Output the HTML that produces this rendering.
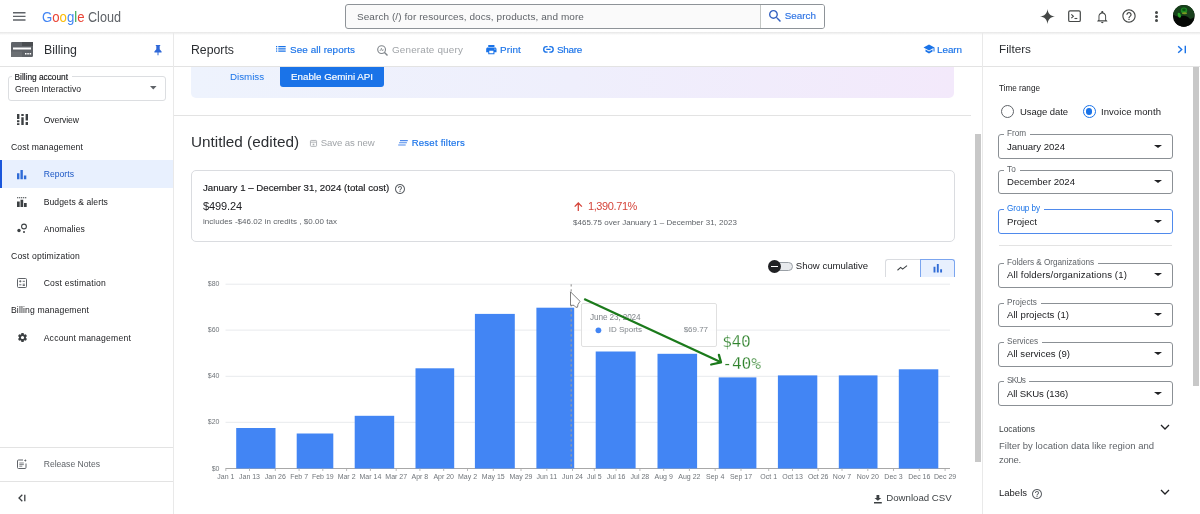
<!DOCTYPE html>
<html lang="en">
<head>
<meta charset="utf-8">
<title>Reports – Billing – Google Cloud console</title>
<style>
*{box-sizing:border-box;margin:0;padding:0}
html,body{width:1200px;height:514px;overflow:hidden;background:#fff;font-family:"Liberation Sans",Arial,sans-serif;color:#202124}
#app{position:relative;width:1200px;height:514px;overflow:hidden;background:#fff}
.t{position:absolute;white-space:pre;display:block}
.b{position:absolute;display:block}
.hl{position:absolute;height:1px;background:#e3e3e3}
.vl{position:absolute;width:1px;background:#e9e9e9}
.sel{position:absolute;left:998px;width:175px;border:1px solid #8b9095;border-radius:3px;background:#fff}
.lblbg{position:absolute;height:3px;background:#fff}
.caret{position:absolute;width:0;height:0;border-left:4px solid transparent;border-right:4px solid transparent;border-top:3.900px solid #202124}
svg{position:absolute;overflow:visible}
</style>
</head>
<body>
<div id="app">

<!-- ===== top header ===== -->
<div class="b" style="left:0;top:32px;width:1200px;height:2.500px;background:linear-gradient(180deg,#e6e6e6 0%,#f1f1f1 45%,rgba(255,255,255,0) 100%)"></div>
<!-- hamburger -->
<svg style="left:12.500px;top:12px" width="12.500" height="9" viewBox="0 0 12.500 9"><path d="M0 0.800h12.500M0 4.400h12.500M0 8h12.500" stroke="#5f6368" stroke-width="1.400"/></svg>
<!-- search box -->
<div class="b" style="left:345px;top:4px;width:480px;height:25px;border:1px solid #8e9398;border-radius:3px;background:#fafafa"></div>
<div class="b" style="left:760px;top:5px;width:64px;height:23px;background:#fff;border-left:1px solid #c4c7c5;border-radius:0 2px 2px 0"></div>
<svg style="left:768.700px;top:10.300px" width="12" height="12" viewBox="3 3 17.500 17.500"><path fill="#3461c1" d="M15.500 14h-.79l-.28-.27A6.470 6.470 0 0 0 16 9.500 6.500 6.500 0 1 0 9.500 16c1.610 0 3.090-.590 4.230-1.570l.27.280v.790l5 4.990L20.490 19l-4.990-5zm-6 0C7.010 14 5 11.990 5 9.500S7.010 5 9.500 5 14 7.010 14 9.500 11.990 14 9.500 14z"/></svg>
<!-- right icons -->
<svg style="left:1040px;top:8.800px" width="15" height="15" viewBox="0 0 16 16"><path fill="#444746" d="M8 0C8.400 4.800 11.200 7.600 16 8 11.200 8.400 8.400 11.200 8 16 7.600 11.200 4.800 8.400 0 8 4.800 7.600 7.600 4.800 8 0z"/></svg>
<svg style="left:1067.800px;top:10px" width="13" height="12.400" viewBox="0 0 13 12"><rect x="0.700" y="0.700" width="11.600" height="10.600" rx="1.300" fill="none" stroke="#444746" stroke-width="1.200"/><path d="M3.300 4.200l2.100 1.900-2.100 1.900" fill="none" stroke="#444746" stroke-width="1.100"/><path d="M6.500 8.300h2.800" stroke="#444746" stroke-width="1.100"/></svg>
<svg style="left:1096px;top:9.600px" width="12.600" height="14.200" viewBox="0 0 24 28"><path fill="#444746" d="M12 26c1.300 0 2.400-1.100 2.400-2.400H9.600C9.600 24.900 10.700 26 12 26zm7.500-7V12.500c0-3.700-2-6.800-5.500-7.600V4c0-1.100-.9-2-2-2s-2 .9-2 2v.9C6.500 5.700 4.500 8.800 4.500 12.500V19L2 21.500V22.500h20v-1L19.500 19zm-1.900 1.200H6.400v-7.700c0-3 2.200-5.800 5.600-5.800s5.600 2.800 5.600 5.800v7.700z"/></svg>
<svg style="left:1121.400px;top:8.300px" width="16" height="16" viewBox="0 0 24 24"><path fill="#444746" d="M11.100 18h1.800v-1.900h-1.800V18zM12 2C6.480 2 2 6.480 2 12s4.480 10 10 10 10-4.480 10-10S17.520 2 12 2zm0 18.300c-4.580 0-8.300-3.720-8.300-8.300S7.420 3.700 12 3.700s8.300 3.720 8.300 8.300-3.720 8.300-8.300 8.300zM12 6c-2.210 0-4 1.790-4 4h1.800c0-1.200 1-2.200 2.200-2.200s2.200 1 2.200 2.200c0 2-3.100 1.900-3.100 5h1.800c0-2.250 3.100-2.500 3.100-5 0-2.210-1.790-4-4-4z"/></svg>
<div class="b" style="left:1154.800px;top:11px;width:3.200px;height:3.200px;border-radius:50%;background:#444746"></div>
<div class="b" style="left:1154.800px;top:14.900px;width:3.200px;height:3.200px;border-radius:50%;background:#444746"></div>
<div class="b" style="left:1154.800px;top:18.800px;width:3.200px;height:3.200px;border-radius:50%;background:#444746"></div>
<!-- avatar -->
<svg style="left:1173px;top:5px" width="22" height="22" viewBox="0 0 22 22"><defs><clipPath id="av"><circle cx="10.800" cy="10.900" r="10.800"/></clipPath></defs><circle cx="10.800" cy="10.900" r="10.800" fill="#070b07"/><g clip-path="url(#av)"><ellipse cx="10" cy="5" rx="12" ry="7.500" fill="#16401a"/><ellipse cx="17" cy="9" rx="5" ry="5" fill="#1a3f1d"/><path d="M4 14C8 10 13 9.500 17 14L22 22H0z" fill="#050805"/><ellipse cx="6.300" cy="10.300" rx="1.500" ry="2.600" fill="#2aa62a" transform="rotate(-20 6.300 10.300)"/><ellipse cx="11" cy="5.500" rx="3.200" ry="3" fill="#1d8a22"/><ellipse cx="11" cy="4.800" rx="1.800" ry="1.300" fill="#0a5412"/><ellipse cx="11.500" cy="8.200" rx="2.600" ry="1" fill="#7c9a22"/></g></svg>

<!-- ===== sub header ===== -->
<div class="hl" style="left:0;top:66px;width:1200px"></div>
<div class="vl" style="left:173px;top:33px;height:481px"></div>
<div class="vl" style="left:982px;top:33px;height:481px"></div>
<!-- billing icon -->
<svg style="left:11px;top:42px" width="22" height="15" viewBox="0 0 22 15"><rect width="22" height="15" rx="1.200" fill="#5f6368"/><rect x="11" y="0" width="11" height="4" fill="#4a4d51"/><rect x="2" y="5.500" width="18" height="2" fill="#fff"/><rect x="0" y="9.500" width="11" height="5.500" fill="#6b6f73"/><rect x="14" y="11" width="1.500" height="1.500" fill="#fff"/><rect x="16.300" y="11" width="1.500" height="1.500" fill="#fff"/><rect x="18.600" y="11" width="1.500" height="1.500" fill="#fff"/></svg>
<!-- pin -->
<svg style="left:153.800px;top:44.800px" width="8" height="10.500" viewBox="0 0 8 10.500"><path fill="#2f68d8" d="M1.800 0h4.400v.9h-.5v3.400l1.900 2.100v1H4.500v2.600l-.5.500-.5-.5V7.400H.4v-1l1.900-2.100V.9h-.5z"/></svg>
<!-- see all reports icon -->
<svg style="left:276.300px;top:46.300px" width="9.700" height="5.800" viewBox="0 0 9.700 5.800"><path fill="#1a73e8" d="M0 0h1.200v1.200H0zM2.300 0h7.400v1.200H2.300zM0 2.300h1.200v1.200H0zM2.300 2.300h7.400v1.200H2.300zM0 4.600h1.200v1.200H0zM2.300 4.600h7.400v1.200H2.300z"/></svg>
<!-- generate query icon -->
<svg style="left:377px;top:44.500px" width="11" height="11" viewBox="0 0 11 11"><circle cx="4.600" cy="4.600" r="3.900" fill="none" stroke="#80868b" stroke-width="1.100"/><path d="M7.500 7.500l3 3" stroke="#80868b" stroke-width="1.400"/><path d="M2.600 5.400h1l.8-2.200.9 2.600.5-.9h1" fill="none" stroke="#80868b" stroke-width="0.700"/></svg>
<!-- print icon -->
<svg style="left:485.600px;top:44.500px" width="10.700" height="9.300" viewBox="2 2 20 18"><path fill="#1a73e8" d="M19 7H5c-1.660 0-3 1.340-3 3v6h4v4h12v-4h4v-6c0-1.660-1.340-3-3-3zm-3 11H8v-5h8v5zm3-7c-.55 0-1-.45-1-1s.45-1 1-1 1 .45 1 1-.45 1-1 1zm-1-9H6v4h12V2z"/></svg>
<!-- share(link) icon -->
<svg style="left:543.100px;top:46px" width="10.900" height="6.900" viewBox="0 0 10.900 6.900"><path d="M4.600 0.700H3.450a2.750 2.750 0 0 0 0 5.500H4.600M6.300 0.700H7.450a2.750 2.750 0 0 1 0 5.500H6.300M3.300 3.450h4.300" fill="none" stroke="#1a73e8" stroke-width="1.350"/></svg>
<!-- learn icon -->
<svg style="left:923px;top:44px" width="12" height="10" viewBox="0 0 24 20"><path fill="#1a73e8" d="M5 11.180v4L12 19l7-3.820v-4L12 15l-7-3.820zM12 1L1 7l11 6 9-4.910V15h2V7L12 1z"/></svg>
<!-- filters collapse icon -->
<svg style="left:1177px;top:45px" width="10" height="9" viewBox="0 0 10 9"><path d="M1.200 1.200L4.700 4.500 1.200 7.800" fill="none" stroke="#1a73e8" stroke-width="1.400"/><path d="M8.300 0.800v7.400" stroke="#1a73e8" stroke-width="1.400"/></svg>

<!-- ===== sidebar ===== -->
<div class="b" style="left:8px;top:76px;width:158px;height:24.500px;border:1px solid #dcdee1;border-radius:3px;background:#fff"></div>
<div class="lblbg" style="left:12px;top:76px;width:60px"></div>
<svg style="left:149.600px;top:86.300px" width="6.600" height="3.600" viewBox="0 0 6.600 3.600"><path d="M0 0h6.600L3.300 3.600z" fill="#5f6368"/></svg>
<!-- overview icon -->
<svg style="left:17px;top:114px" width="11" height="11" viewBox="0 0 11 11"><path fill="#3c4043" d="M0 0h2.400v5H0zM0 6.300h2.400v1.900H0zM0 9.300h2.400V11H0zM4.300 0h2.400v2H4.300zM4.300 3.300h2.400V11H4.300zM8.600 0H11v6.500H8.600zM8.600 8H11v3H8.600z"/></svg>
<!-- active row -->
<div class="b" style="left:0;top:160px;width:173px;height:27.500px;background:#e8f0fe"></div>
<div class="b" style="left:0;top:160px;width:2px;height:27.500px;background:#1a56db"></div>
<svg style="left:17px;top:169.500px" width="9.300" height="9.300" viewBox="0 0 9.300 9.300"><path fill="#2f6bd6" d="M0 3.200h2.400v6.100H0zM3.450 0h2.400v9.300h-2.400zM6.900 5.600h2.400v3.700H6.900z"/></svg>
<!-- budgets icon -->
<svg style="left:17px;top:196.500px" width="10" height="10" viewBox="0 0 10 10"><path fill="#3c4043" d="M0 4.500h2.700V10H0zM3.500 2.800h2.700V10H3.500zM7 6h2.700v4H7z"/><path d="M0 0.800h9.700" stroke="#3c4043" stroke-width="1.100" stroke-dasharray="1.300 0.700"/></svg>
<!-- anomalies icon -->
<svg style="left:17px;top:223px" width="11" height="11" viewBox="0 0 11 11"><circle cx="2" cy="7.500" r="1.700" fill="#3c4043"/><circle cx="7" cy="3.500" r="2.400" fill="none" stroke="#3c4043" stroke-width="1.100"/><circle cx="7" cy="9" r="1" fill="#3c4043"/></svg>
<!-- cost estimation icon -->
<svg style="left:17px;top:278px" width="10" height="10" viewBox="0 0 10 10"><rect x="0.500" y="0.500" width="9" height="9" rx="1" fill="none" stroke="#5f6368" stroke-width="1"/><path d="M2.200 3.300h2.200M3.300 2.200v2.200M5.700 3.300h2.200M2.200 6.800h2.200M5.700 6.200h2.200M5.700 7.500h2.200" stroke="#5f6368" stroke-width="0.950"/></svg>
<!-- gear icon -->
<svg style="left:16.500px;top:332px" width="11" height="11" viewBox="0 0 24 24"><path fill="#3c4043" d="M19.430 12.980c.04-.32.070-.64.070-.98s-.03-.66-.07-.98l2.110-1.650c.19-.15.240-.42.120-.64l-2-3.460c-.12-.22-.39-.3-.61-.22l-2.490 1c-.52-.4-1.080-.73-1.690-.98l-.38-2.650C14.460 2.180 14.250 2 14 2h-4c-.25 0-.46.180-.49.420l-.38 2.650c-.61.250-1.170.59-1.690.98l-2.490-1c-.23-.09-.49 0-.61.220l-2 3.460c-.13.220-.07.490.12.640l2.110 1.650c-.04.320-.07.650-.07.980s.03.660.07.980l-2.110 1.650c-.19.150-.24.420-.12.640l2 3.460c.12.220.39.300.61.220l2.490-1c.52.400 1.080.73 1.690.98l.38 2.650c.03.240.24.420.49.420h4c.25 0 .46-.18.490-.42l.38-2.650c.61-.25 1.170-.59 1.690-.98l2.490 1c.23.090.49 0 .61-.22l2-3.460c.12-.22.070-.49-.12-.64l-2.110-1.650zM12 15.500c-1.930 0-3.500-1.570-3.500-3.500s1.570-3.500 3.500-3.500 3.500 1.570 3.500 3.500-1.570 3.500-3.500 3.500z"/></svg>
<div class="hl" style="left:0;top:447px;width:173px"></div>
<div class="hl" style="left:0;top:481px;width:173px"></div>
<!-- release notes icon -->
<svg style="left:17px;top:459px" width="10" height="10" viewBox="0 0 10 10"><path d="M6 1H1.500A1 1 0 0 0 .5 2v6.500a1 1 0 0 0 1 1H8a1 1 0 0 0 1-1V4.500" fill="none" stroke="#5f6368" stroke-width="1"/><path d="M2.300 4h4.500M2.300 5.600h4.500M2.300 7.200h3" stroke="#5f6368" stroke-width="0.800"/><path d="M8.300 0l.4 1.100 1.100.4-1.100.4-.4 1.100-.4-1.100-1.100-.4 1.100-.4z" fill="#5f6368"/></svg>
<!-- collapse icon -->
<svg style="left:17.500px;top:493.500px" width="8" height="8" viewBox="0 0 8 8"><path d="M4.300 0.800L1 4l3.300 3.200" fill="none" stroke="#3c4043" stroke-width="1.300"/><path d="M6.800 0.800v6.400" stroke="#3c4043" stroke-width="1.300"/></svg>

<!-- ===== main content ===== -->
<!-- banner -->
<div class="b" style="left:191px;top:67px;width:763px;height:31px;border-radius:0 0 5px 5px;background:linear-gradient(90deg,#eef3fd 0%,#efeffc 50%,#f3e9fb 100%)"></div>
<div class="b" style="left:280px;top:67px;width:104px;height:20px;border-radius:0 0 3px 3px;background:#1a73e8"></div>
<div class="hl" style="left:174px;top:115px;width:797px"></div>
<!-- main scrollbar -->
<div class="b" style="left:975.100px;top:134px;width:6px;height:327.600px;background:#c8c8c8"></div>
<!-- save-as-new icon -->
<svg style="left:310.200px;top:140.300px" width="7" height="6.800" viewBox="0 0 7 6.800"><rect x="0.450" y="0.450" width="6.100" height="5.900" rx="0.700" fill="none" stroke="#a9adb1" stroke-width="0.900"/><path d="M0.500 2.200h6" stroke="#a9adb1" stroke-width="0.900"/><rect x="2.700" y="3.700" width="1.600" height="1.600" fill="#a9adb1"/></svg>
<!-- reset filters icon -->
<svg style="left:398.200px;top:140.200px" width="10" height="5.600" viewBox="0 0 10 5.600"><path d="M2 0.600h7.800M1.100 2.800h7.800M0.200 5h7.500" stroke="#4f8aec" stroke-width="1.150"/></svg>
<!-- summary card -->
<div class="b" style="left:191px;top:170px;width:764px;height:72px;border:1px solid #dadce0;border-radius:5px;background:#fff"></div>
<svg style="left:394.200px;top:182.500px" width="12" height="12" viewBox="0 0 24 24"><path fill="#5f6368" d="M11 18h2v-2h-2v2zm1-16C6.480 2 2 6.480 2 12s4.480 10 10 10 10-4.480 10-10S17.520 2 12 2zm0 18c-4.410 0-8-3.590-8-8s3.590-8 8-8 8 3.590 8 8-3.590 8-8 8zm0-14c-2.210 0-4 1.790-4 4h2c0-1.100.9-2 2-2s2 .9 2 2c0 2-3 1.750-3 5h2c0-2.250 3-2.500 3-5 0-2.210-1.790-4-4-4z"/></svg>
<!-- red up arrow -->
<svg style="left:574.300px;top:201.800px" width="8.600" height="9" viewBox="0 0 8.600 9"><path d="M4.300 9V1.200M0.700 4.600L4.300 1l3.600 3.600" fill="none" stroke="#d5443a" stroke-width="1.250"/></svg>
<!-- toggle -->
<div class="b" style="left:772px;top:262px;width:21px;height:9px;border-radius:5px;background:#e8eaed;border:1px solid #9aa0a6"></div>
<div class="b" style="left:768px;top:260px;width:13px;height:13px;border-radius:50%;background:#202124"></div>
<div class="b" style="left:771px;top:265.700px;width:7px;height:1.600px;background:#fff"></div>
<!-- chart type buttons -->
<div class="b" style="left:885.200px;top:259.400px;width:36px;height:17.500px;border:1px solid #dadce0;border-bottom:none;border-right:none;border-radius:3px 0 0 0;background:#fff"></div>
<div class="b" style="left:920.200px;top:259.400px;width:34.500px;height:17.500px;background:#e8f0fe;border:1px solid #7ba5ef;border-bottom:none;border-radius:0 3px 0 0"></div>
<svg style="left:897.300px;top:264.800px" width="10.500" height="6.200" viewBox="0 0 11 6.500"><path d="M0.500 5.500L3.800 2.600l2.100 1.800L10.500 0.700" fill="none" stroke="#3c4043" stroke-width="1.100"/></svg>
<svg style="left:932.500px;top:264.400px" width="9.600" height="8.500" viewBox="0 0 9 9"><path fill="#2f6bd6" d="M0 3h2v6H0zM3.500 0h2v9h-2zM7 5.500h2V9H7z"/></svg>

<svg style="left:0;top:0;will-change:transform" width="1200" height="514" viewBox="0 0 1200 514">
<path d="M225.500 284.2H950" stroke="#e8eaed" stroke-width="1"/>
<path d="M225.500 330.1H950" stroke="#e8eaed" stroke-width="1"/>
<path d="M225.500 376.3H950" stroke="#e8eaed" stroke-width="1"/>
<path d="M225.500 422.3H950" stroke="#e8eaed" stroke-width="1"/>
<path d="M225.500 468.5H950" stroke="#a8a8a8" stroke-width="1"/>
<rect x="236.2" y="428.0" width="39.3" height="40.5" fill="#4285f4"/>
<rect x="296.7" y="433.5" width="36.6" height="35.0" fill="#4285f4"/>
<rect x="354.7" y="415.8" width="39.5" height="52.7" fill="#4285f4"/>
<rect x="415.5" y="368.3" width="38.7" height="100.2" fill="#4285f4"/>
<rect x="474.9" y="313.9" width="39.9" height="154.6" fill="#4285f4"/>
<rect x="536.4" y="307.7" width="37.8" height="160.8" fill="#4285f4"/>
<rect x="595.7" y="351.5" width="39.9" height="117.0" fill="#4285f4"/>
<rect x="657.5" y="353.8" width="39.6" height="114.7" fill="#4285f4"/>
<rect x="718.7" y="377.4" width="37.7" height="91.1" fill="#4285f4"/>
<rect x="777.9" y="375.4" width="39.4" height="93.1" fill="#4285f4"/>
<rect x="838.8" y="375.4" width="38.7" height="93.1" fill="#4285f4"/>
<rect x="898.8" y="369.3" width="39.5" height="99.2" fill="#4285f4"/>
<path d="M571.200 284.200V468" stroke="#9e9e9e" stroke-width="1.200" stroke-dasharray="2.400 2.600"/>
<text x="219.500" y="286.3" text-anchor="end" font-size="7" fill="#70757a" font-family="Liberation Sans, Arial, sans-serif">$80</text>
<text x="219.500" y="332.2" text-anchor="end" font-size="7" fill="#70757a" font-family="Liberation Sans, Arial, sans-serif">$60</text>
<text x="219.500" y="378.4" text-anchor="end" font-size="7" fill="#70757a" font-family="Liberation Sans, Arial, sans-serif">$40</text>
<text x="219.500" y="424.4" text-anchor="end" font-size="7" fill="#70757a" font-family="Liberation Sans, Arial, sans-serif">$20</text>
<text x="219.500" y="470.6" text-anchor="end" font-size="7" fill="#70757a" font-family="Liberation Sans, Arial, sans-serif">$0</text>
<text x="225.8" y="479" text-anchor="middle" font-size="7" fill="#70757a" font-family="Liberation Sans, Arial, sans-serif">Jan 1</text>
<text x="249.5" y="479" text-anchor="middle" font-size="7" fill="#70757a" font-family="Liberation Sans, Arial, sans-serif">Jan 13</text>
<text x="275.3" y="479" text-anchor="middle" font-size="7" fill="#70757a" font-family="Liberation Sans, Arial, sans-serif">Jan 26</text>
<text x="299.1" y="479" text-anchor="middle" font-size="7" fill="#70757a" font-family="Liberation Sans, Arial, sans-serif">Feb 7</text>
<text x="322.8" y="479" text-anchor="middle" font-size="7" fill="#70757a" font-family="Liberation Sans, Arial, sans-serif">Feb 19</text>
<text x="346.6" y="479" text-anchor="middle" font-size="7" fill="#70757a" font-family="Liberation Sans, Arial, sans-serif">Mar 2</text>
<text x="370.4" y="479" text-anchor="middle" font-size="7" fill="#70757a" font-family="Liberation Sans, Arial, sans-serif">Mar 14</text>
<text x="396.2" y="479" text-anchor="middle" font-size="7" fill="#70757a" font-family="Liberation Sans, Arial, sans-serif">Mar 27</text>
<text x="419.9" y="479" text-anchor="middle" font-size="7" fill="#70757a" font-family="Liberation Sans, Arial, sans-serif">Apr 8</text>
<text x="443.7" y="479" text-anchor="middle" font-size="7" fill="#70757a" font-family="Liberation Sans, Arial, sans-serif">Apr 20</text>
<text x="467.5" y="479" text-anchor="middle" font-size="7" fill="#70757a" font-family="Liberation Sans, Arial, sans-serif">May 2</text>
<text x="493.3" y="479" text-anchor="middle" font-size="7" fill="#70757a" font-family="Liberation Sans, Arial, sans-serif">May 15</text>
<text x="521.0" y="479" text-anchor="middle" font-size="7" fill="#70757a" font-family="Liberation Sans, Arial, sans-serif">May 29</text>
<text x="546.8" y="479" text-anchor="middle" font-size="7" fill="#70757a" font-family="Liberation Sans, Arial, sans-serif">Jun 11</text>
<text x="572.5" y="479" text-anchor="middle" font-size="7" fill="#70757a" font-family="Liberation Sans, Arial, sans-serif">Jun 24</text>
<text x="594.3" y="479" text-anchor="middle" font-size="7" fill="#70757a" font-family="Liberation Sans, Arial, sans-serif">Jul 5</text>
<text x="616.1" y="479" text-anchor="middle" font-size="7" fill="#70757a" font-family="Liberation Sans, Arial, sans-serif">Jul 16</text>
<text x="639.9" y="479" text-anchor="middle" font-size="7" fill="#70757a" font-family="Liberation Sans, Arial, sans-serif">Jul 28</text>
<text x="663.7" y="479" text-anchor="middle" font-size="7" fill="#70757a" font-family="Liberation Sans, Arial, sans-serif">Aug 9</text>
<text x="689.4" y="479" text-anchor="middle" font-size="7" fill="#70757a" font-family="Liberation Sans, Arial, sans-serif">Aug 22</text>
<text x="715.2" y="479" text-anchor="middle" font-size="7" fill="#70757a" font-family="Liberation Sans, Arial, sans-serif">Sep 4</text>
<text x="741.0" y="479" text-anchor="middle" font-size="7" fill="#70757a" font-family="Liberation Sans, Arial, sans-serif">Sep 17</text>
<text x="768.7" y="479" text-anchor="middle" font-size="7" fill="#70757a" font-family="Liberation Sans, Arial, sans-serif">Oct 1</text>
<text x="792.5" y="479" text-anchor="middle" font-size="7" fill="#70757a" font-family="Liberation Sans, Arial, sans-serif">Oct 13</text>
<text x="818.2" y="479" text-anchor="middle" font-size="7" fill="#70757a" font-family="Liberation Sans, Arial, sans-serif">Oct 26</text>
<text x="842.0" y="479" text-anchor="middle" font-size="7" fill="#70757a" font-family="Liberation Sans, Arial, sans-serif">Nov 7</text>
<text x="867.8" y="479" text-anchor="middle" font-size="7" fill="#70757a" font-family="Liberation Sans, Arial, sans-serif">Nov 20</text>
<text x="893.5" y="479" text-anchor="middle" font-size="7" fill="#70757a" font-family="Liberation Sans, Arial, sans-serif">Dec 3</text>
<text x="919.3" y="479" text-anchor="middle" font-size="7" fill="#70757a" font-family="Liberation Sans, Arial, sans-serif">Dec 16</text>
<text x="945.1" y="479" text-anchor="middle" font-size="7" fill="#70757a" font-family="Liberation Sans, Arial, sans-serif">Dec 29</text>
<path d="M225.8 468.500v2.500M249.5 468.500v2.500M275.3 468.500v2.500M299.1 468.500v2.500M322.8 468.500v2.500M346.6 468.500v2.500M370.4 468.500v2.500M396.2 468.500v2.500M419.9 468.500v2.500M443.7 468.500v2.500M467.5 468.500v2.500M493.3 468.500v2.500M521.0 468.500v2.500M546.8 468.500v2.500M572.5 468.500v2.500M594.3 468.500v2.500M616.1 468.500v2.500M639.9 468.500v2.500M663.7 468.500v2.500M689.4 468.500v2.500M715.2 468.500v2.500M741.0 468.500v2.500M768.7 468.500v2.500M792.5 468.500v2.500M818.2 468.500v2.500M842.0 468.500v2.500M867.8 468.500v2.500M893.5 468.500v2.500M919.3 468.500v2.500M945.1 468.500v2.500" stroke="#a8a8a8" stroke-width="0.800" fill="none"/>
</svg>
<div class="b" style="left:581px;top:303px;width:136px;height:43.500px;background:rgba(255,255,255,0.860);border:1px solid #e0e0e0;border-radius:2px"></div>
<svg style="left:595px;top:327px" width="7" height="7" viewBox="0 0 7 7"><circle cx="3.400" cy="3.300" r="2.900" fill="#4285f4"/></svg>

<!-- download icon -->
<svg style="left:873.500px;top:495px" width="7.800" height="8.600" viewBox="0 0 7.800 8.600"><path fill="#3c4043" d="M2.500 0h2.800v3h2L3.900 5.800 0.500 3h2zM0 7.100h7.800v1.500H0z"/></svg>

<!-- ===== filter panel ===== -->
<div class="b" style="left:1193.200px;top:67px;width:5.800px;height:319.200px;background:#c8c8c8"></div>
<!-- radios -->
<div class="b" style="left:1001px;top:105px;width:13px;height:13px;border-radius:50%;border:1.200px solid #5f6368;background:#fff"></div>
<div class="b" style="left:1082.500px;top:105px;width:13px;height:13px;border-radius:50%;border:1.300px solid #1a73e8;background:#fff"></div>
<div class="b" style="left:1085.700px;top:108.200px;width:6.600px;height:6.600px;border-radius:50%;background:#1a73e8"></div>
<!-- selects -->
<div class="sel" style="top:134px;height:24.500px"></div><div class="lblbg" style="left:1004px;top:133px;width:26px"></div><div class="caret" style="left:1154.400px;top:144.500px"></div>
<div class="sel" style="top:169.500px;height:24.500px"></div><div class="lblbg" style="left:1004px;top:168.500px;width:16px"></div><div class="caret" style="left:1154.400px;top:180px"></div>
<div class="sel" style="top:209px;height:24.500px;border-color:#4f8aec"></div><div class="lblbg" style="left:1004px;top:208px;width:40px"></div><div class="caret" style="left:1154.400px;top:219.500px"></div>
<div class="hl" style="left:999px;top:245px;width:173px"></div>
<div class="sel" style="top:262.500px;height:25px"></div><div class="lblbg" style="left:1004px;top:261.500px;width:94px"></div><div class="caret" style="left:1154.400px;top:273px"></div>
<div class="sel" style="top:302.500px;height:24px"></div><div class="lblbg" style="left:1004px;top:301.500px;width:37px"></div><div class="caret" style="left:1154.400px;top:312.500px"></div>
<div class="sel" style="top:341.500px;height:25px"></div><div class="lblbg" style="left:1004px;top:340.500px;width:38px"></div><div class="caret" style="left:1154.400px;top:352px"></div>
<div class="sel" style="top:380.500px;height:25px"></div><div class="lblbg" style="left:1004px;top:379.500px;width:25px"></div><div class="caret" style="left:1154.400px;top:391.500px"></div>
<!-- chevrons -->
<svg style="left:1160px;top:424px" width="10" height="7" viewBox="0 0 10 7"><path d="M1 1l4 4 4-4" fill="none" stroke="#202124" stroke-width="1.300"/></svg>
<svg style="left:1160px;top:489px" width="10" height="7" viewBox="0 0 10 7"><path d="M1 1l4 4 4-4" fill="none" stroke="#202124" stroke-width="1.300"/></svg>
<svg style="left:1031.400px;top:487.600px" width="12" height="12" viewBox="0 0 24 24"><path fill="#5f6368" d="M11 18h2v-2h-2v2zm1-16C6.480 2 2 6.480 2 12s4.480 10 10 10 10-4.480 10-10S17.520 2 12 2zm0 18c-4.410 0-8-3.590-8-8s3.590-8 8-8 8 3.590 8 8-3.590 8-8 8zm0-14c-2.210 0-4 1.790-4 4h2c0-1.100.9-2 2-2s2 .9 2 2c0 2-3 1.750-3 5h2c0-2.250 3-2.500 3-5 0-2.210-1.790-4-4-4z"/></svg>

<div id="tx" style="position:absolute;left:0;top:0;width:1200px;height:514px;will-change:transform">
<span class="t" style="left:42px;top:6.6px;font-size:15.3px;line-height:20px;letter-spacing:0.000px;color:#4285f4;transform-origin:0 50%;transform:scaleX(0.8616);"><span style="color:#4285f4">G</span><span style="color:#ea4335">o</span><span style="color:#fbbc05">o</span><span style="color:#4285f4">g</span><span style="color:#34a853">l</span><span style="color:#ea4335">e</span></span>
<span class="t" style="left:88px;top:6.6px;font-size:15.3px;line-height:20px;letter-spacing:0.000px;color:#5f6368;transform-origin:0 50%;transform:scaleX(0.8256);">Cloud</span>
<span class="t" style="left:357px;top:9.6px;font-size:9.97px;line-height:14px;letter-spacing:0.085px;color:#5f6368;">Search (/) for resources, docs, products, and more</span>
<span class="t" style="left:784.8px;top:8.9px;font-size:9.85px;line-height:14px;letter-spacing:-0.001px;color:#2f74e4;-webkit-text-stroke:0.16px;">Search</span>
<span class="t" style="left:44px;top:41.6px;font-size:12.37px;line-height:16px;letter-spacing:0.002px;color:#2c2f33;">Billing</span>
<span class="t" style="left:191px;top:41.6px;font-size:12.28px;line-height:16px;letter-spacing:0.007px;color:#2c2f33;">Reports</span>
<span class="t" style="left:290px;top:42.6px;font-size:9.9px;line-height:14px;letter-spacing:0.089px;color:#1a73e8;-webkit-text-stroke:0.16px;">See all reports</span>
<span class="t" style="left:392px;top:42.6px;font-size:9.9px;line-height:14px;letter-spacing:0.170px;color:#a0a4a8;">Generate query</span>
<span class="t" style="left:500px;top:42.6px;font-size:9.9px;line-height:14px;letter-spacing:0.138px;color:#1a73e8;-webkit-text-stroke:0.16px;">Print</span>
<span class="t" style="left:557px;top:42.6px;font-size:9.9px;line-height:14px;letter-spacing:-0.272px;color:#1a73e8;-webkit-text-stroke:0.16px;">Share</span>
<span class="t" style="left:937px;top:42.6px;font-size:9.9px;line-height:14px;letter-spacing:-0.053px;color:#1a73e8;-webkit-text-stroke:0.16px;">Learn</span>
<span class="t" style="left:999px;top:40.9px;font-size:11.75px;line-height:16px;letter-spacing:0.000px;color:#2c2f33;">Filters</span>
<span class="t" style="left:14.6px;top:71.1px;font-size:8.3px;line-height:12px;letter-spacing:-0.008px;color:#202124;-webkit-text-stroke:0.16px;">Billing account</span>
<span class="t" style="left:15px;top:83.1px;font-size:8.6px;line-height:12px;letter-spacing:0.005px;color:#202124;">Green Interactivo</span>
<span class="t" style="left:43.7px;top:113.5px;font-size:8.6px;line-height:12px;letter-spacing:-0.066px;color:#202124;">Overview</span>
<span class="t" style="left:11.0px;top:141.0px;font-size:8.61px;line-height:12px;letter-spacing:0.119px;color:#202124;">Cost management</span>
<span class="t" style="left:43.7px;top:168.0px;font-size:8.61px;line-height:12px;letter-spacing:0.029px;color:#1a56c4;">Reports</span>
<span class="t" style="left:43.7px;top:195.5px;font-size:8.61px;line-height:12px;letter-spacing:0.077px;color:#202124;">Budgets &amp; alerts</span>
<span class="t" style="left:43.7px;top:222.5px;font-size:8.61px;line-height:12px;letter-spacing:0.131px;color:#202124;">Anomalies</span>
<span class="t" style="left:11.0px;top:250.0px;font-size:8.61px;line-height:12px;letter-spacing:0.181px;color:#202124;">Cost optimization</span>
<span class="t" style="left:43.7px;top:277.0px;font-size:8.61px;line-height:12px;letter-spacing:0.204px;color:#202124;">Cost estimation</span>
<span class="t" style="left:11.0px;top:304.0px;font-size:8.61px;line-height:12px;letter-spacing:0.140px;color:#202124;">Billing management</span>
<span class="t" style="left:43.7px;top:331.5px;font-size:8.61px;line-height:12px;letter-spacing:0.205px;color:#202124;">Account management</span>
<span class="t" style="left:43.7px;top:458.0px;font-size:8.6px;line-height:12px;letter-spacing:-0.006px;color:#5f6368;">Release Notes</span>
<span class="t" style="left:230px;top:69.5px;font-size:9.75px;line-height:14px;letter-spacing:-0.018px;color:#1a73e8;">Dismiss</span>
<span class="t" style="left:291px;top:69.5px;font-size:9.75px;line-height:14px;letter-spacing:0.009px;color:#fff;-webkit-text-stroke:0.16px;">Enable Gemini API</span>
<span class="t" style="left:191px;top:131.8px;font-size:15.3px;line-height:20px;letter-spacing:0.001px;color:#2c2f33;">Untitled (edited)</span>
<span class="t" style="left:320.7px;top:135.6px;font-size:9.6px;line-height:14px;letter-spacing:-0.103px;color:#a0a4a8;">Save as new</span>
<span class="t" style="left:411.7px;top:135.7px;font-size:9.6px;line-height:14px;letter-spacing:0.203px;color:#1a73e8;-webkit-text-stroke:0.16px;">Reset filters</span>
<span class="t" style="left:203px;top:180.8px;font-size:9.69px;line-height:14px;letter-spacing:0.004px;color:#202124;-webkit-text-stroke:0.16px;">January 1 – December 31, 2024 (total cost)</span>
<span class="t" style="left:203px;top:197.8px;font-size:11.0px;line-height:16px;letter-spacing:-0.109px;color:#202124;">$499.24</span>
<span class="t" style="left:203px;top:216.0px;font-size:7.98px;line-height:12px;letter-spacing:0.051px;color:#5f6368;">includes -$46.02 in credits , $0.00 tax</span>
<span class="t" style="left:588px;top:197.8px;font-size:11.0px;line-height:16px;letter-spacing:-0.401px;color:#d5443a;">1,390.71%</span>
<span class="t" style="left:573px;top:216.6px;font-size:7.98px;line-height:12px;letter-spacing:0.033px;color:#5f6368;">$465.75 over January 1 – December 31, 2023</span>
<span class="t" style="left:795.8px;top:259.0px;font-size:9.58px;line-height:14px;letter-spacing:-0.007px;color:#202124;">Show cumulative</span>
<span class="t" style="left:886.2px;top:491.1px;font-size:9.66px;line-height:14px;letter-spacing:0.001px;color:#3c4043;">Download CSV</span>
<span class="t" style="left:590px;top:312.4px;font-size:8.24px;line-height:12px;letter-spacing:-0.131px;color:#80868b;">June 23, 2024</span>
<span class="t" style="left:608.8px;top:324.3px;font-size:8.0px;line-height:12px;letter-spacing:-0.016px;color:#80868b;">ID Sports</span>
<span class="t" style="left:683.7px;top:324.3px;font-size:8.0px;line-height:12px;letter-spacing:-0.028px;color:#80868b;">$69.77</span>
<span class="t" style="left:722.2px;top:331.3px;font-size:16.3px;line-height:22px;letter-spacing:-0.374px;color:#2f822c;font-family:'DejaVu Sans Mono', 'Liberation Mono', monospace;-webkit-text-stroke:0.28px #fff;">$40</span>
<span class="t" style="left:722.2px;top:352.5px;font-size:16.3px;line-height:22px;letter-spacing:-0.105px;color:#2f822c;font-family:'DejaVu Sans Mono', 'Liberation Mono', monospace;-webkit-text-stroke:0.28px #fff;">-40%</span>
<span class="t" style="left:999px;top:82.6px;font-size:8.16px;line-height:12px;letter-spacing:0.005px;color:#202124;">Time range</span>
<span class="t" style="left:1020px;top:105.1px;font-size:9.5px;line-height:14px;letter-spacing:-0.059px;color:#202124;">Usage date</span>
<span class="t" style="left:1101px;top:105.1px;font-size:9.5px;line-height:14px;letter-spacing:0.065px;color:#202124;">Invoice month</span>
<span class="t" style="left:1007px;top:128.2px;font-size:8.2px;line-height:12px;letter-spacing:-0.027px;color:#5f6368;">From</span>
<span class="t" style="left:1007px;top:139.6px;font-size:9.6px;line-height:14px;letter-spacing:-0.012px;color:#202124;">January 2024</span>
<span class="t" style="left:1007px;top:163.7px;font-size:8.2px;line-height:12px;letter-spacing:0.172px;color:#5f6368;">To</span>
<span class="t" style="left:1007px;top:175.1px;font-size:9.6px;line-height:14px;letter-spacing:-0.020px;color:#202124;">December 2024</span>
<span class="t" style="left:1007px;top:203.2px;font-size:8.2px;line-height:12px;letter-spacing:-0.086px;color:#1a73e8;">Group by</span>
<span class="t" style="left:1007px;top:214.6px;font-size:9.6px;line-height:14px;letter-spacing:0.020px;color:#202124;">Project</span>
<span class="t" style="left:1007px;top:256.7px;font-size:8.2px;line-height:12px;letter-spacing:-0.036px;color:#5f6368;">Folders &amp; Organizations</span>
<span class="t" style="left:1007px;top:268.1px;font-size:9.6px;line-height:14px;letter-spacing:0.129px;color:#202124;">All folders/organizations (1)</span>
<span class="t" style="left:1007px;top:296.5px;font-size:8.2px;line-height:12px;letter-spacing:0.053px;color:#5f6368;">Projects</span>
<span class="t" style="left:1007px;top:307.9px;font-size:9.6px;line-height:14px;letter-spacing:0.043px;color:#202124;">All projects (1)</span>
<span class="t" style="left:1007px;top:335.7px;font-size:8.2px;line-height:12px;letter-spacing:-0.051px;color:#5f6368;">Services</span>
<span class="t" style="left:1007px;top:346.6px;font-size:9.6px;line-height:14px;letter-spacing:0.006px;color:#202124;">All services (9)</span>
<span class="t" style="left:1007px;top:374.7px;font-size:8.2px;line-height:12px;letter-spacing:-0.734px;color:#5f6368;">SKUs</span>
<span class="t" style="left:1007px;top:386.6px;font-size:9.6px;line-height:14px;letter-spacing:-0.137px;color:#202124;">All SKUs (136)</span>
<span class="t" style="left:999px;top:423.1px;font-size:8.4px;line-height:12px;letter-spacing:0.016px;color:#3c4043;">Locations</span>
<span class="t" style="left:999px;top:438.9px;font-size:9.5px;line-height:14px;letter-spacing:0.007px;color:#5f6368;">Filter by location data like region and</span>
<span class="t" style="left:999px;top:452.9px;font-size:9.5px;line-height:14px;letter-spacing:-0.250px;color:#5f6368;">zone.</span>
<span class="t" style="left:999px;top:486.4px;font-size:9.5px;line-height:14px;letter-spacing:0.000px;color:#202124;">Labels</span>
</div>

<svg style="left:0;top:0" width="1200" height="514" viewBox="0 0 1200 514">
<path d="M584.200 299L720.500 362" stroke="#1b7a1b" stroke-width="2.300" fill="none"/>
<path d="M718.900 354.900L721 362.300L711.200 364.500" stroke="#1b7a1b" stroke-width="2.300" fill="none" stroke-linecap="round" stroke-linejoin="round"/>
<path d="M570.500 291.800V305.300H574L575.800 307.300 577.500 307.200 578 304.400 580 301.300Z" fill="#fff" stroke="#555" stroke-width="0.750" stroke-linejoin="round"/>
</svg>
</div>
</body>
</html>
